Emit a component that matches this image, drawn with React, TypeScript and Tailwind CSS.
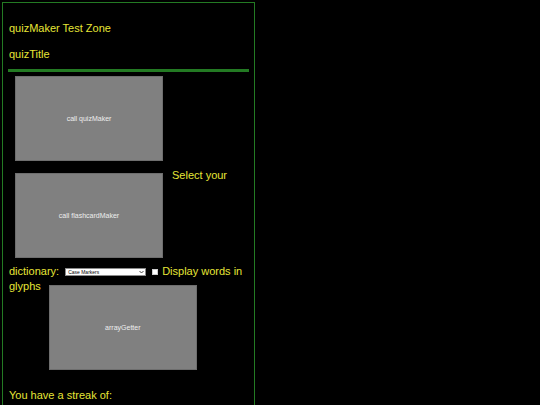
import React from "react";

const font = { fontFamily: '"Liberation Sans", Arial, sans-serif' };

function GrayButton({ label, className = "" }: { label: string; className?: string }) {
  return (
    <div
      className={
        "flex h-[85px] w-[148px] shrink-0 items-center justify-center border border-[#6e6e6e] bg-[#808080] text-[7px] text-[#eeeeee] " +
        className
      }
    >
      {label}
    </div>
  );
}

export default function App() {
  return (
    <div className="h-[405px] w-[540px] overflow-hidden bg-black" style={font}>
      <div className="ml-[2px] mt-[2px] h-[420px] w-[253px] border border-[#237a23] px-[5px] text-[11px] leading-[16px] text-[#e6e636]">
        <div className="pl-[1px] pt-[17px]">quizMaker Test Zone</div>
        <div className="mt-[10px] pl-[1px]">quizTitle</div>
        <div className="mt-[7px] h-[3px] w-full bg-[#237a23]" />
        <div className="mt-[4px] flex">
          <GrayButton label="call quizMaker" className="ml-[7px]" />
        </div>
        <div className="mt-[6px] flex items-start">
          <GrayButton label="call flashcardMaker" className="ml-[7px] mt-[6px]" />
          <span className="ml-[9px]">Select your</span>
        </div>
        <div className="mt-[6px] flex h-[15px] items-center leading-[15px]">
          <span className="pl-[1px]">dictionary:</span>
          <div className="ml-[6px] flex h-[8px] w-[81px] items-center justify-between border border-[#8a8a8a] bg-white pl-[2px] pr-[1px]">
            <span className="text-[5px] leading-[6px] text-black">Case Markers</span>
            <svg width="5" height="4" viewBox="0 0 5 4">
              <path d="M0.5 1 L2.5 3 L4.5 1" stroke="#333" strokeWidth="0.9" fill="none" />
            </svg>
          </div>
          <div className="ml-[6px] h-[6px] w-[6px] border border-[#cccccc] bg-white" />
          <span className="ml-[4px]">Display words in</span>
        </div>
        <div className="flex items-start leading-[15px]">
          <span className="pl-[1px]">glyphs</span>
          <GrayButton label="arrayGetter" className="ml-[8px] mt-[6px]" />
        </div>
        <div className="mt-[17px] pl-[1px]">You have a streak of:</div>
      </div>
    </div>
  );
}
